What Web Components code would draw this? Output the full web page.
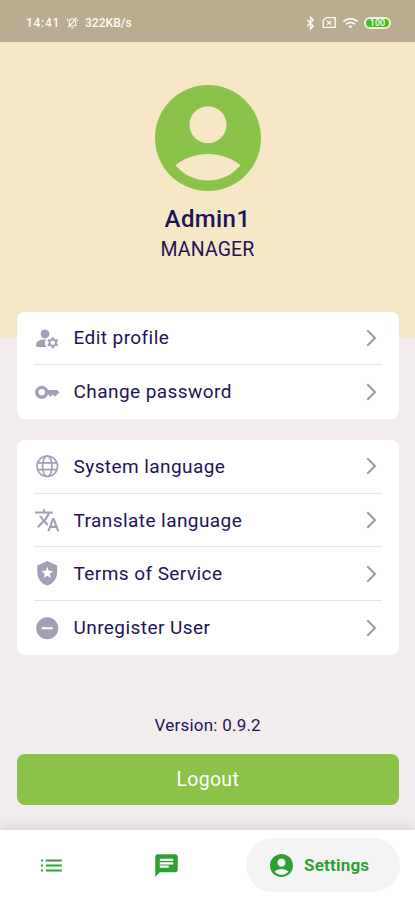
<!DOCTYPE html>
<html lang="en">
<head>
<meta charset="utf-8">
<meta name="viewport" content="width=device-width, initial-scale=1">
<title>Settings</title>
<style>
  body {
    margin: 0;
    font-family: Roboto, "Liberation Sans", sans-serif;
    color: #1d1458;
  }
</style>
</head>
<body>
<settings-page></settings-page>

<script>
const ICONS = {
  account: '<path d="M12 2C6.48 2 2 6.48 2 12s4.48 10 10 10 10-4.48 10-10S17.52 2 12 2zm0 4c1.93 0 3.5 1.57 3.5 3.5S13.93 13 12 13s-3.5-1.57-3.5-3.5S10.07 6 12 6zm0 14c-2.03 0-4.43-.82-6.14-2.88C7.55 15.8 9.68 15 12 15s4.45.8 6.14 2.12C16.43 19.18 14.03 20 12 20z"/>',
  manage: '<circle cx="10" cy="8" r="4"/><path d="M10.67 13.02C10.45 13.01 10.23 13 10 13c-2.42 0-4.68.67-6.61 1.82C2.51 15.34 2 16.32 2 17.35V20h9.26a6.96 6.96 0 0 1-.59-6.98zM20.75 16c0-.22-.03-.42-.06-.63l1.14-1.01-1-1.73-1.45.49c-.32-.27-.68-.48-1.08-.63L18 11h-2l-.3 1.49c-.4.15-.76.36-1.08.63l-1.45-.49-1 1.73 1.14 1.01c-.03.21-.06.41-.06.63s.03.42.06.63l-1.14 1.01 1 1.73 1.45-.49c.32.27.68.48 1.08.63L16 21h2l.3-1.49c.4-.15.76-.36 1.08-.63l1.45.49 1-1.73-1.14-1.01c.03-.21.06-.41.06-.63zM17 18c-1.1 0-2-.9-2-2s.9-2 2-2 2 .9 2 2-.9 2-2 2z"/>',
  key: '<path d="M21 10h-8.35C11.83 7.67 9.61 6 7 6c-3.31 0-6 2.69-6 6s2.69 6 6 6c2.61 0 4.83-1.67 5.65-4H13l2 2 2-2 2 2 4-4.04L21 10zM7 15c-1.65 0-3-1.35-3-3s1.35-3 3-3 3 1.35 3 3-1.35 3-3 3z"/>',
  globe: '<g fill="none" stroke="currentColor" stroke-width="1.5"><circle cx="12" cy="12" r="9.3"/><ellipse cx="12" cy="12" rx="4.3" ry="9.3"/><path d="M3.400 8.900h17.200M3.400 15.100h17.200"/></g>',
  translate: '<path d="M12.87 15.07l-2.54-2.51.03-.03c1.74-1.94 2.98-4.17 3.71-6.53H17V4h-7V2H8v2H1v1.99h11.17C11.5 7.92 10.44 9.75 9 11.35 8.07 10.32 7.3 9.19 6.69 8h-2c.73 1.63 1.73 3.17 2.98 4.56l-5.09 5.02L4 19l5-5 3.11 3.11.76-2.04zM18.5 10h-2L12 22h2l1.12-3h4.75L21 22h2l-4.5-12zm-2.62 7l1.62-4.33L19.12 17h-3.24z"/>',
  shield: '<path fill-rule="evenodd" d="M12 1L3 5v6c0 5.55 3.84 10.74 9 12 5.16-1.26 9-6.45 9-12V5l-9-4zM12 6.2l1.4 3.6 3.9.2-3 2.5 1 3.8-3.3-2.1-3.3 2.1 1-3.8-3-2.5 3.9-.2z"/>',
  minus: '<path d="M12 2C6.48 2 2 6.48 2 12s4.48 10 10 10 10-4.48 10-10S17.52 2 12 2zm5 11H7v-2h10v2z"/>',
  chevron: '<path d="M8.3 4.2l7.7 7.8-7.7 7.8" fill="none" stroke="currentColor" stroke-width="2"/>',
  list: '<path d="M2.600 6.700h1.800v1.800H2.600zM7 6.700h14.200v1.800H7zM2.600 11.100h1.800v1.800H2.600zM7 11.100h14.200v1.800H7zM2.600 15.500h1.800v1.800H2.600zM7 15.500h14.200v1.800H7z"/>',
  chat: '<path d="M20 2H4c-1.1 0-1.99.9-1.99 2L2 22l4-4h14c1.1 0 2-.9 2-2V4c0-1.1-.9-2-2-2zM6 9h12v2H6V9zm8 5H6v-2h8v2zm4-6H6V6h12v2z"/>',
  bellOff: '<g fill="none" stroke="currentColor" stroke-width="2"><path d="M6 17V11a6 6 0 0 1 12 0v6M4 18h16M10 21.5h4M20 3L4 21M2 9l2-4M22 9l-1-2"/></g>',
  bluetooth: '<path d="M5 6.5l13 11L12 22V2l6 4.5-13 11" fill="none" stroke="currentColor" stroke-width="2.8"/>',
  simOff: '<g fill="none" stroke="currentColor" stroke-width="2.2"><path d="M7 3h14v18H2V8z"/><path d="M8 9l7 7M15 9l-7 7"/></g>',
  wifi: '<path d="M1 9l2 2c4.97-4.97 13.03-4.97 18 0l2-2C16.93 2.93 7.08 2.93 1 9zm8 8l3 3 3-3c-1.65-1.66-4.34-1.66-6 0zm-4-4l2 2c2.76-2.76 7.24-2.76 10 0l2-2C15.14 9.14 8.87 9.14 5 13z"/>'
};

class AppIcon extends HTMLElement {
  connectedCallback() {
    const shadow = this.attachShadow({ mode: "open" });
    shadow.innerHTML = `
      <style>
        :host { display: inline-flex; flex: none; width: 24px; height: 24px; }
        svg { display: block; width: 100%; height: 100%; fill: currentColor; }
      </style>
      <svg viewBox="${this.getAttribute("box") || "0 0 24 24"}" preserveAspectRatio="none">${ICONS[this.getAttribute("name")]}</svg>
    `;
  }
}

class StatusBar extends HTMLElement {
  constructor() {
    super();
    this.attachShadow({ mode: "open" }).innerHTML = `
      <style>
        :host {
          display: flex;
          align-items: center;
          justify-content: space-between;
          box-sizing: border-box;
          height: 42px;
          padding: 3px 24px 0 26px;
          background: #b9ac91;
          color: #fffaf0;
          font-size: 12px;
          font-weight: 500;
          line-height: 14px;
        }
        div { display: flex; align-items: center; }
        .time { letter-spacing: 0.7px; width: 40px; }
        .speed { letter-spacing: 0.05px; margin-left: 6px; }
        .bell { width: 13px; height: 13px; }
        .bt { width: 11px; height: 14px; }
        .sim { width: 15px; height: 13px; margin-left: 6px; }
        .wifi { width: 17px; height: 16px; margin-left: 5px; }
        .battery {
          justify-content: center;
          box-sizing: border-box;
          width: 27px;
          height: 12px;
          margin-left: 5px;
          border: 2px solid #f4f2dd;
          border-radius: 6px;
          background: #43bd22;
          font-size: 9px;
          line-height: 8px;
        }
      </style>
      <div>
        <span class="time">14:41</span>
        <app-icon class="bell" name="bellOff"></app-icon>
        <span class="speed">322KB/s</span>
      </div>
      <div>
        <app-icon class="bt" name="bluetooth"></app-icon>
        <app-icon class="sim" name="simOff"></app-icon>
        <app-icon class="wifi" name="wifi"></app-icon>
        <div class="battery">100</div>
      </div>
    `;
  }
}

class ProfileHeader extends HTMLElement {
  constructor() {
    super();
    this.attachShadow({ mode: "open" }).innerHTML = `
      <style>
        :host {
          display: flex;
          flex-direction: column;
          align-items: center;
          box-sizing: border-box;
          height: 295.5px;
          padding-top: 43px;
          background: #f6e7c7;
        }
        app-icon { width: 106px; height: 106px; color: #8bc34a; }
        .name {
          margin-top: 13px;
          font-size: 24px;
          font-weight: 500;
          line-height: 30px;
          letter-spacing: 0.4px;
        }
        .role { margin-top: 2px; font-size: 19.5px; line-height: 28px; letter-spacing: 0.15px; }
      </style>
      <app-icon name="account" box="2 2 20 20"></app-icon>
      <div class="name"><slot name="name"></slot></div>
      <div class="role"><slot name="role"></slot></div>
    `;
  }
}

class MenuCard extends HTMLElement {
  constructor() {
    super();
    this.attachShadow({ mode: "open" }).innerHTML = `
      <style>
        :host {
          display: block;
          padding: 0 17px;
          border-radius: 8px;
          background: #fff;
        }
        ::slotted(menu-row:not(:last-child)) { border-bottom: 1.5px solid #e4e4e8; }
      </style>
      <slot></slot>
    `;
  }
}

class MenuRow extends HTMLElement {
  connectedCallback() {
    this.attachShadow({ mode: "open" }).innerHTML = `
      <style>
        :host {
          display: flex;
          align-items: center;
          box-sizing: border-box;
          height: 53.6px;
        }
        app-icon { color: #a0a1b5; }
        .icon { width: 26.5px; height: 26.5px; }
        .label {
          flex: 1;
          margin-left: 13px;
          padding-top: 1px;
          font-size: 19px;
          line-height: 26px;
          letter-spacing: 0.43px;
        }
        .chevron { color: #9b9bab; margin-right: -1px; }
      </style>
      <app-icon class="icon" name="${this.getAttribute("icon")}"></app-icon>
      <span class="label"><slot></slot></span>
      <app-icon class="chevron" name="chevron"></app-icon>
    `;
  }
}

class NavBar extends HTMLElement {
  constructor() {
    super();
    this.attachShadow({ mode: "open" }).innerHTML = `
      <style>
        :host {
          display: flex;
          align-items: center;
          box-sizing: border-box;
          height: 70px;
          padding: 0 15px 0 38px;
          background: #fff;
          box-shadow: 0 -3px 14px rgba(0, 0, 0, 0.12);
          color: #2ea136;
        }
        .list, .chat { width: 27px; height: 27px; }
        .chat { margin-left: 88px; }
        .active {
          display: flex;
          align-items: center;
          box-sizing: border-box;
          width: 154px;
          height: 54px;
          margin-left: auto;
          padding-left: 24px;
          border-radius: 27px;
          background: #f4f4f4;
          font-size: 17px;
          font-weight: 700;
          letter-spacing: 0.2px;
        }
        .active app-icon { width: 23px; height: 23px; margin-right: 11px; }
      </style>
      <app-icon class="list" name="list"></app-icon>
      <app-icon class="chat" name="chat"></app-icon>
      <div class="active"><app-icon name="account" box="2 2 20 20"></app-icon><span>Settings</span></div>
    `;
  }
}

class SettingsPage extends HTMLElement {
  constructor() {
    super();
    this.attachShadow({ mode: "open" }).innerHTML = `
      <style>
        :host {
          display: flex;
          flex-direction: column;
          height: 900px;
          overflow: hidden;
          background: #f2ecec;
        }
        main {
          display: flex;
          flex-direction: column;
          flex: 1;
          margin-top: -26px;
          padding: 0 16.5px 0 17px;
        }
        .second { margin-top: 21.5px; }
        .version {
          margin-top: 58.5px;
          font-size: 17px;
          line-height: 24px;
          letter-spacing: 0.22px;
          text-align: center;
        }
        button {
          height: 51px;
          margin: 17px 0 0;
          padding: 0;
          border: none;
          border-radius: 8px;
          background: #8bc34a;
          color: #fff;
          font: inherit;
          font-size: 19.5px;
          letter-spacing: 0.3px;
        }
      </style>
      <status-bar></status-bar>
      <profile-header>
        <span slot="name">Admin1</span>
        <span slot="role">MANAGER</span>
      </profile-header>
      <main>
        <menu-card>
          <menu-row icon="manage">Edit profile</menu-row>
          <menu-row icon="key">Change password</menu-row>
        </menu-card>
        <menu-card class="second">
          <menu-row icon="globe">System language</menu-row>
          <menu-row icon="translate">Translate language</menu-row>
          <menu-row icon="shield">Terms of Service</menu-row>
          <menu-row icon="minus">Unregister User</menu-row>
        </menu-card>
        <div class="version">Version: 0.9.2</div>
        <button>Logout</button>
      </main>
      <nav-bar></nav-bar>
    `;
  }
}

customElements.define("app-icon", AppIcon);
customElements.define("status-bar", StatusBar);
customElements.define("profile-header", ProfileHeader);
customElements.define("menu-card", MenuCard);
customElements.define("menu-row", MenuRow);
customElements.define("nav-bar", NavBar);
customElements.define("settings-page", SettingsPage);
</script>
</body>
</html>
